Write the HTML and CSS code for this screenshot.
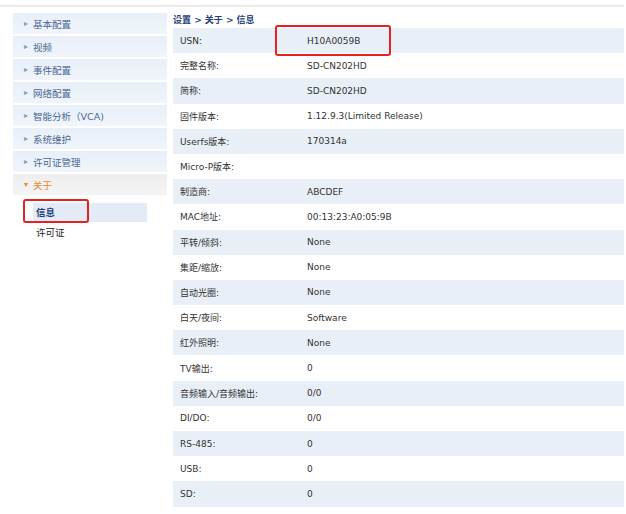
FILE: index.html
```html
<!DOCTYPE html>
<html lang="zh">
<head>
<meta charset="utf-8">
<link rel="stylesheet" href="styles.css">
</head>
<body>
<div class="page">
  <div class="topline"></div>
  <div class="main">
    <nav class="sidebar">
      <div class="nav-item"><span class="arrow">&#9656;</span>基本配置</div>
      <div class="nav-item"><span class="arrow">&#9656;</span>视频</div>
      <div class="nav-item"><span class="arrow">&#9656;</span>事件配置</div>
      <div class="nav-item"><span class="arrow">&#9656;</span>网络配置</div>
      <div class="nav-item"><span class="arrow">&#9656;</span>智能分析（VCA)</div>
      <div class="nav-item"><span class="arrow">&#9656;</span>系统维护</div>
      <div class="nav-item"><span class="arrow">&#9656;</span>许可证管理</div>
      <div class="nav-item open"><span class="arrow down">&#9662;</span>关于</div>
      <div class="sub">
        <div class="sub-item active">信息<span class="mark mark-side"></span></div>
        <div class="sub-item">许可证</div>
      </div>
    </nav>
    <section class="content">
      <div class="crumb">设置 &gt; 关于 &gt; 信息</div>
      <div class="rows">
        <div class="row"><span class="label">USN:</span><span class="value">H10A0059B<span class="mark mark-usn"></span></span></div>
        <div class="row"><span class="label">完整名称:</span><span class="value">SD-CN202HD</span></div>
        <div class="row"><span class="label">简称:</span><span class="value">SD-CN202HD</span></div>
        <div class="row"><span class="label">固件版本:</span><span class="value">1.12.9.3(Limited Release)</span></div>
        <div class="row"><span class="label">Userfs版本:</span><span class="value">170314a</span></div>
        <div class="row"><span class="label">Micro-P版本:</span><span class="value"></span></div>
        <div class="row"><span class="label">制造商:</span><span class="value">ABCDEF</span></div>
        <div class="row"><span class="label">MAC地址:</span><span class="value">00:13:23:A0:05:9B</span></div>
        <div class="row"><span class="label">平转/倾斜:</span><span class="value">None</span></div>
        <div class="row"><span class="label">集距/缩放:</span><span class="value">None</span></div>
        <div class="row"><span class="label">自动光圈:</span><span class="value">None</span></div>
        <div class="row"><span class="label">白天/夜间:</span><span class="value">Software</span></div>
        <div class="row"><span class="label">红外照明:</span><span class="value">None</span></div>
        <div class="row"><span class="label">TV输出:</span><span class="value">0</span></div>
        <div class="row"><span class="label">音频输入/音频输出:</span><span class="value">0/0</span></div>
        <div class="row"><span class="label">DI/DO:</span><span class="value">0/0</span></div>
        <div class="row"><span class="label">RS-485:</span><span class="value">0</span></div>
        <div class="row"><span class="label">USB:</span><span class="value">0</span></div>
        <div class="row"><span class="label">SD:</span><span class="value">0</span></div>
      </div>
    </section>
  </div>
</div>
</body>
</html>
```

FILE: styles.css
```css
html, body {
  margin: 0;
  padding: 0;
  background: #ffffff;
}
body {
  font-family: "DejaVu Sans", "Noto Sans CJK SC", sans-serif;
  font-size: 9px;
  color: #333333;
}
.page {
  width: 624px;
  padding-top: 5px;
}
.topline {
  height: 2px;
  background: #ebebeb;
}
.main {
  display: flex;
  padding-top: 6px;
}
.sidebar {
  width: 154px;
  margin-left: 13px;
  display: flex;
  flex-direction: column;
  gap: 2px;
}
.nav-item {
  height: 21px;
  display: flex;
  align-items: center;
  padding-left: 11px;
  background: linear-gradient(#e7eff8, #f1f5fb);
  color: #4a6796;
  font-size: 9.5px;
}
.arrow {
  font-size: 8px;
  color: #7f9cc6;
  width: 9px;
  margin-right: 0;
}
.nav-item.open {
  background: linear-gradient(#eeeeee, #f4f4f4);
  color: #e7892c;
}
.arrow.down {
  color: #e7892c;
}
.sub {
  padding-top: 6px;
  display: flex;
  flex-direction: column;
  gap: 1px;
}
.sub-item {
  position: relative;
  height: 19px;
  line-height: 19px;
  margin-left: 20px;
  width: 111px;
  padding-left: 3px;
  color: #222222;
  font-size: 9.5px;
}
.sub-item.active {
  background: #e3ecf6;
  color: #1e3f78;
  font-weight: bold;
}
.mark {
  position: absolute;
  border: 2px solid #e2231f;
  border-radius: 3px;
  pointer-events: none;
}
.mark-side {
  left: -10px;
  top: -4px;
  width: 62px;
  height: 20px;
}
.content {
  margin-left: 6px;
  flex: 1;
  display: flex;
  flex-direction: column;
}
.crumb {
  height: 15px;
  line-height: 15px;
  color: #1e3f78;
  font-weight: bold;
  font-size: 9px;
}
.rows {
  display: flex;
  flex-direction: column;
}
.row {
  height: 25.2px;
  display: flex;
  align-items: center;
  padding-left: 7px;
}
.row:nth-child(odd) {
  background: #e8eff6;
}
.label {
  width: 127px;
}
.value {
  position: relative;
}
.mark-usn {
  left: -32px;
  top: -11px;
  width: 112px;
  height: 27px;
}
```
